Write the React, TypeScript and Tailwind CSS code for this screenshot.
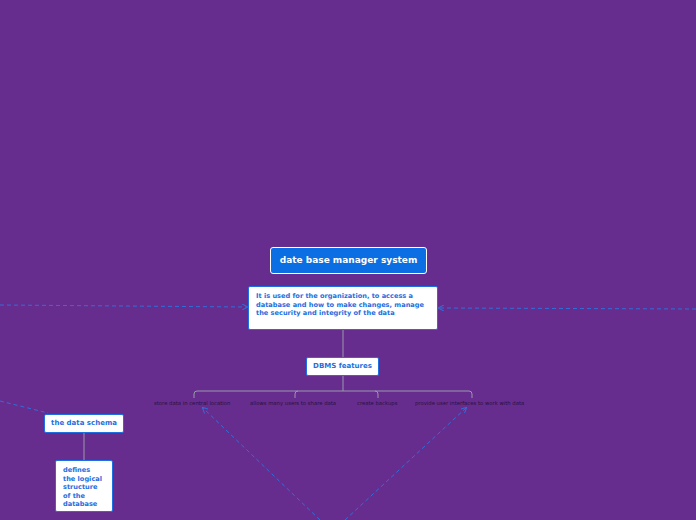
export default function App() {
  const f = { fontFamily: '"DejaVu Sans", Verdana, sans-serif' };
  return (
    <div className="relative w-[696px] h-[520px] overflow-hidden bg-[#662d8f]" style={f}>
      <svg className="absolute inset-0" width="696" height="520">
        <defs>
          <marker id="a" markerWidth="6" markerHeight="6" refX="5" refY="3" orient="auto">
            <path d="M0,0 L6,3 L0,6" fill="none" stroke="#2f6fd8" strokeWidth="1" />
          </marker>
        </defs>
        <g stroke="#2f6fd8" strokeWidth="1" strokeDasharray="4 3" fill="none">
          <line x1="0" y1="305" x2="247" y2="307" markerEnd="url(#a)" />
          <line x1="696" y1="309" x2="439" y2="308" markerEnd="url(#a)" />
          <line x1="0" y1="401" x2="48" y2="413" />
          <line x1="320" y1="520" x2="203" y2="408" markerEnd="url(#a)" />
          <line x1="345" y1="520" x2="466" y2="408" markerEnd="url(#a)" />
        </g>
        <g stroke="#9a9aa8" strokeWidth="1" fill="none">
          <line x1="343" y1="330" x2="343" y2="357" />
          <line x1="343" y1="376" x2="343" y2="391" />
          <path d="M194,398 V394 Q194,391 197,391 H469 Q472,391 472,394 V398" />
          <path d="M295,398 V394 Q295,391 298,391 M375,391 Q378,391 378,394 V398" />
          <line x1="84" y1="433" x2="84" y2="460" />
        </g>
      </svg>
      <div className="absolute left-[270px] top-[247px] w-[157px] h-[27px] flex items-center justify-center rounded-[3px] border border-white bg-[#0b6fe3] text-white font-bold text-[9px]">
        date base manager system
      </div>
      <div className="absolute left-[248px] top-[286px] w-[190px] h-[44px] rounded-[2px] border border-[#1e6fe0] bg-white pl-[7px] pt-[5px] pr-2 text-[#1e6fe0] font-bold text-[6.6px] leading-[8.6px]">
        It is used for the organization, to access a database and how to make changes, manage the security and integrity of the data
      </div>
      <div className="absolute left-[306px] top-[357px] w-[73px] h-[19px] flex items-center justify-center rounded-[2px] border border-[#1e6fe0] bg-white text-[#1e6fe0] font-bold text-[7px]">
        DBMS features
      </div>
      <div className="absolute top-[400px] left-0 w-full text-[5.3px] text-[#2a1040]">
        <span className="absolute left-[154px]">store data in central location</span>
        <span className="absolute left-[250px]">allows many users to share data</span>
        <span className="absolute left-[357px]">create backups</span>
        <span className="absolute left-[415px]">provide user interfaces to work with data</span>
      </div>
      <div className="absolute left-[44px] top-[414px] w-[80px] h-[19px] flex items-center justify-center rounded-[2px] border border-[#1e6fe0] bg-white text-[#1e6fe0] font-bold text-[7px]">
        the data schema
      </div>
      <div className="absolute left-[55px] top-[460px] w-[58px] h-[52px] rounded-[2px] border border-[#1e6fe0] bg-white pl-[7px] pt-[5px] text-[#1e6fe0] font-bold text-[6.6px] leading-[8.6px]">
        defines<br />the logical<br />structure<br />of the<br />database
      </div>
    </div>
  );
}
